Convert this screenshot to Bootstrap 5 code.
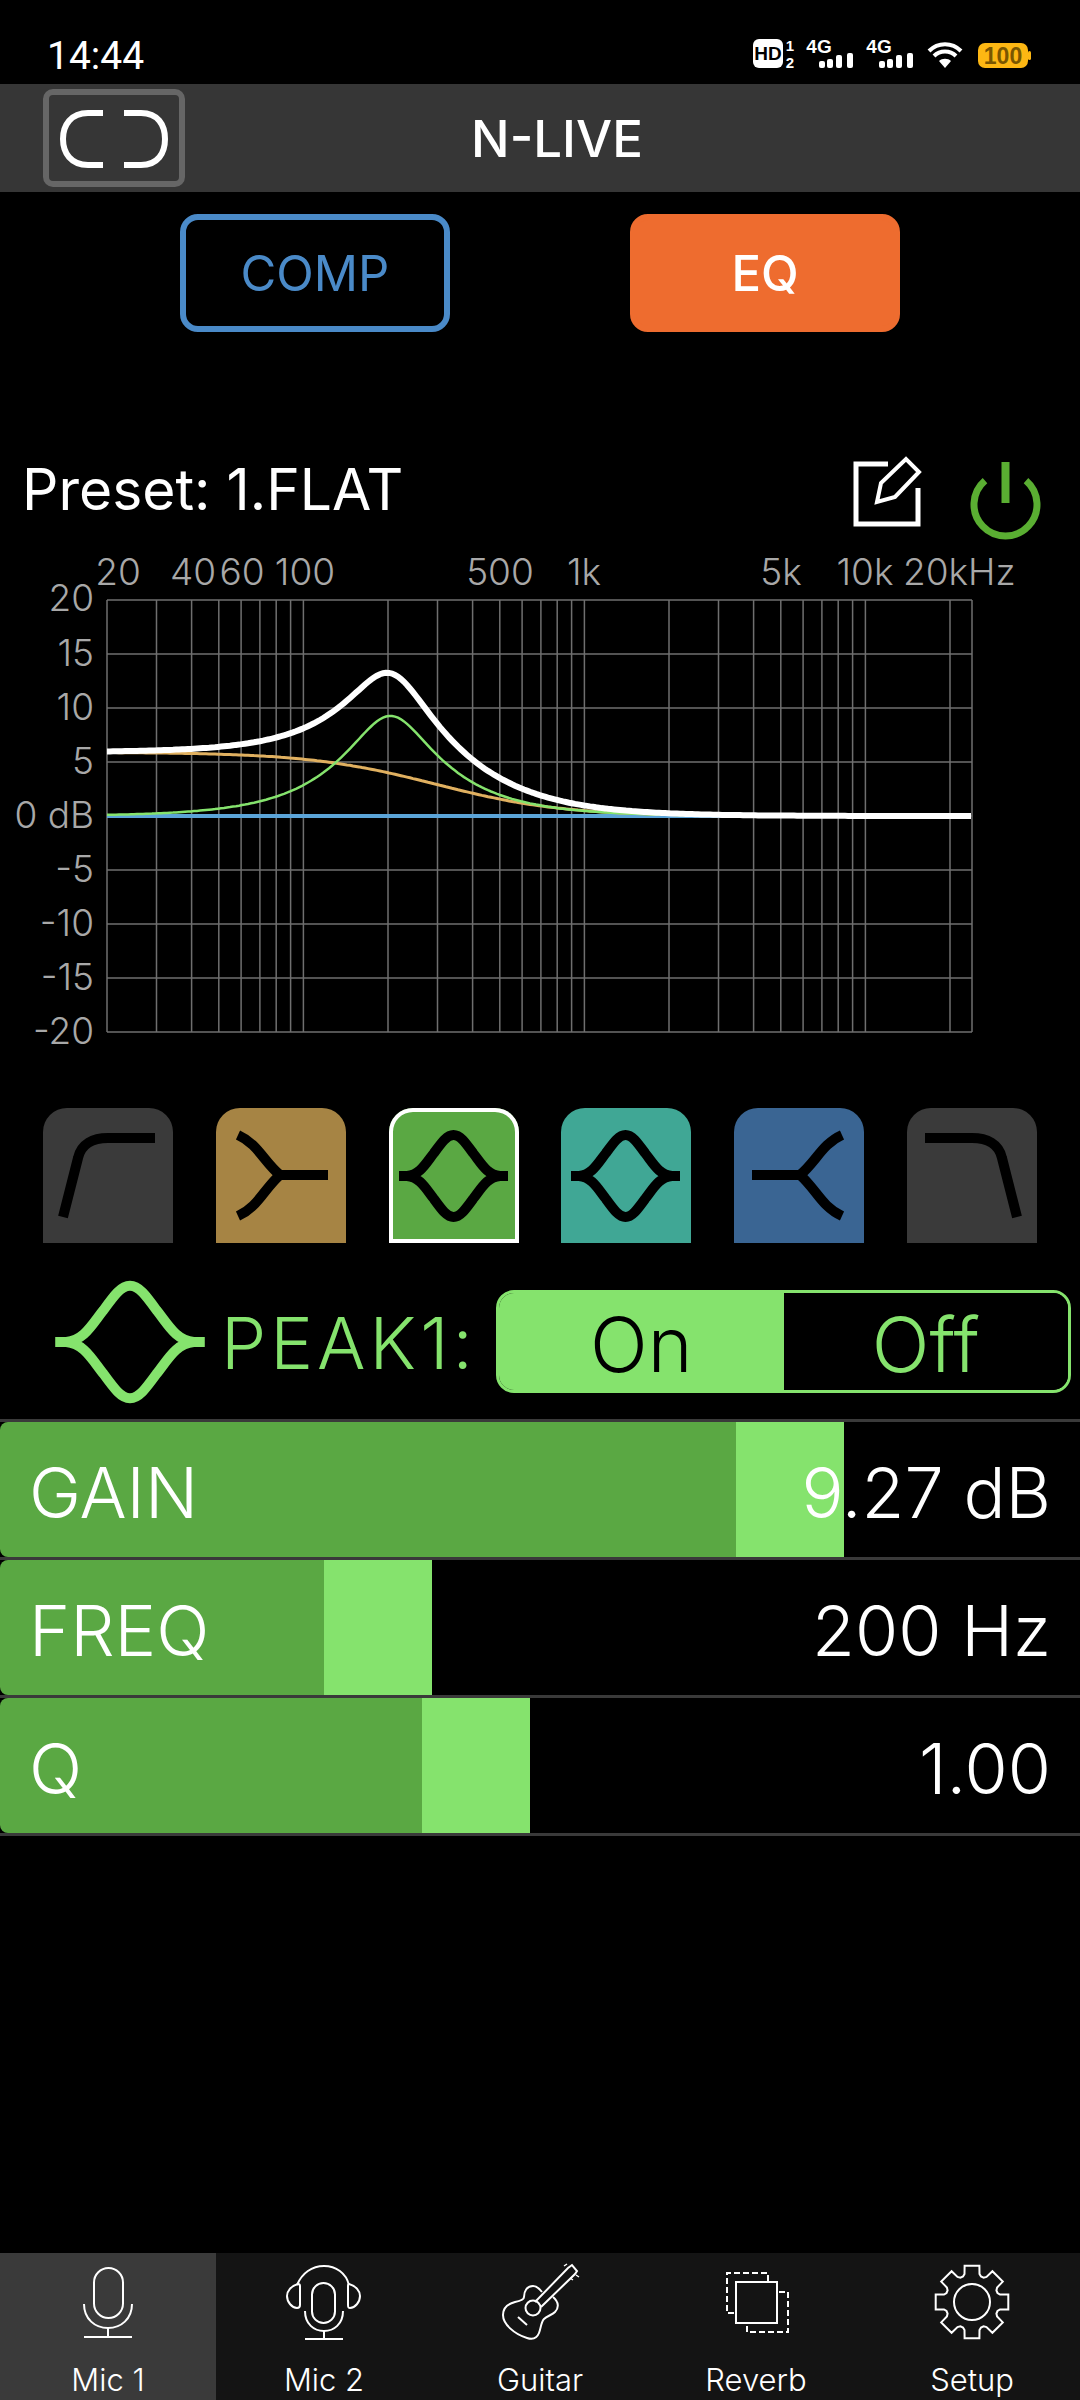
<!DOCTYPE html>
<html lang="en">
<head>
    <meta charset="UTF-8">
    <meta name="viewport" content="width=device-width, initial-scale=1.0">
    <title>N-LIVE</title>
    <link rel="stylesheet" href="https://cdn.jsdelivr.net/npm/bootstrap@5.3.0/dist/css/bootstrap.min.css">
    <style>
        html, body { background: #000; }
        body {
            width: 1080px;
            height: 2400px;
            margin: 0;
            overflow: hidden;
            color: #fff;
            font-family: "Inter", "Liberation Sans", sans-serif;
            font-weight: 300;
        }
        svg { display: block; }

        .status-row { height: 84px; padding: 32px 45px 0 47px; }
        .status-time { font-family: "Roboto", sans-serif; font-weight: 400; font-size: 39px; line-height: 48px; }

        .top-bar { height: 108px; background: #363636; }
        .back-btn {
            width: 142px; height: 98px; margin-left: 43px; padding: 0;
            border: 6px solid #666; border-radius: 10px; background: transparent;
        }
        .app-title { flex: 1; padding-right: 151px; text-align: center; font-size: 51px; font-weight: 500; line-height: 1; }

        .mode-row { padding-top: 22px; }
        .mode-btn {
            width: 270px; height: 118px; padding: 0;
            border: 6px solid; border-radius: 18px;
            font-size: 49px; font-weight: 400; line-height: 1;
        }
        .mode-comp, .mode-comp:hover { border-color: #4a8ac8; background: #000; color: #4a8ac8; }
        .mode-eq, .mode-eq:hover { border-color: #ee6c2f; background: #ee6c2f; color: #fff; font-weight: 500; }

        .preset-row { height: 213px; padding: 124px 39px 0 22px; }
        .preset-name { font-size: 57px; font-weight: 400; line-height: 67px; }
        .preset-icons { gap: 48px; }

        .chart-text { font-family: "Inter", "Liberation Sans", sans-serif; font-weight: 300; font-size: 37px; fill: #a8a8a8; }

        .filter-row { height: 135px; margin-top: 48px; padding: 0 43px; }
        .filter-tab {
            width: 130px; height: 135px; padding: 0;
            border: 0; border-radius: 24px 24px 0 0;
            fill: none; stroke: #000; stroke-width: 10;
        }
        .tab-grey { background: #3a3a3a; }
        .tab-brown { background: #a68444; }
        .tab-green { background: #5aa843; box-shadow: inset 0 0 0 4px #fff; }
        .tab-teal { background: #40a795; }
        .tab-blue { background: #3a6593; }

        .band-row { height: 177px; padding: 40px 9px 0 55px; color: #85e36d; }
        .band-star { fill: none; stroke: #85e36d; stroke-width: 7.300; overflow: visible; }
        .band-name { margin-left: 16px; width: 275px; font-size: 72px; letter-spacing: 4px; line-height: 1; }
        .band-toggle {
            width: 575px; height: 103px; margin-top: 7px;
            border: 3px solid #85e36d; border-radius: 18px; overflow: hidden;
        }
        .band-toggle .btn {
            flex: 1; padding: 5px 0 0; border: 0; border-radius: 0;
            font-size: 76px; font-weight: 300; line-height: 1;
        }
        .toggle-on, .toggle-on:hover { background: #85e36d; color: #000; }
        .toggle-off, .toggle-off:hover { background: #000; color: #85e36d; }

        .param-list { border-top: 3px solid #3a3a3a; margin-top: -1px; }
        .param-row {
            height: 138px; padding: 6px 29px 0 29px;
            border-bottom: 3px solid #3a3a3a;
            font-size: 70px; line-height: 1;
        }
        .param-fill {
            position: absolute; left: 0; top: 0; bottom: 0;
            background: #5aa843; border-radius: 8px 0 0 8px;
        }
        .param-handle {
            position: absolute; right: 0; top: 0; bottom: 0;
            width: 108px; background: #85e36d;
        }
        .param-text { position: relative; }

        .bottom-nav { height: 147px; margin-top: auto; background: #141414; }
        .bottom-nav .nav-link {
            flex: 1; height: 147px; padding: 5px 0 0;
            color: #fff;
            font-family: "Inter", "Liberation Sans", sans-serif; font-weight: 300; font-size: 31px; line-height: 36px;
        }
        .bottom-nav .nav-link.active { background: #3a3a3a; }
        .nav-icon { fill: none; stroke: #fff; stroke-width: 2; margin: 0 auto 22px; }
    </style>
</head>
<body class="d-flex flex-column">

    <div class="status-row d-flex justify-content-between">
        <div class="status-time">14:44</div>
        <svg width="285" height="40" viewBox="750 32 285 40" font-family="Liberation Sans, sans-serif" font-weight="700">
            <rect x="753" y="39" width="30" height="29" rx="6" fill="#fff"/>
            <text x="768" y="60" font-size="19" text-anchor="middle" fill="#000">HD</text>
            <text x="790" y="51" font-size="15" text-anchor="middle" fill="#fff">1</text>
            <text x="790" y="68" font-size="15" text-anchor="middle" fill="#fff">2</text>
            <text x="819" y="53" font-size="19" text-anchor="middle" fill="#fff">4G</text>
            <g fill="#fff">
                <rect x="819" y="61" width="6" height="7" rx="2"/><rect x="827" y="59" width="6" height="9" rx="2"/>
                <rect x="836" y="55" width="6" height="13" rx="2"/><rect x="847" y="53" width="6" height="15" rx="2"/>
            </g>
            <text x="879" y="53" font-size="19" text-anchor="middle" fill="#fff">4G</text>
            <g fill="#fff">
                <rect x="879" y="61" width="6" height="7" rx="2"/><rect x="887" y="59" width="6" height="9" rx="2"/>
                <rect x="896" y="55" width="6" height="13" rx="2"/><rect x="907" y="53" width="6" height="15" rx="2"/>
            </g>
            <g fill="none" stroke="#fff" stroke-width="4">
                <path d="M929 51 C938 42 952 42 961 51"/>
                <path d="M934 56 C940 50 950 50 956 56"/>
            </g>
            <path d="M939 61 C942 58 948 58 951 61 L945 68 Z" fill="#fff"/>
            <rect x="978" y="43" width="50" height="25" rx="7" fill="#fdb713"/>
            <rect x="1028" y="51" width="3" height="9" rx="1.5" fill="#fdb713"/>
            <text x="1003" y="63.500" font-size="23" text-anchor="middle" fill="#7a5600">100</text>
        </svg>
    </div>

    <div class="top-bar d-flex align-items-center">
        <button class="back-btn btn" aria-label="Back">
            <svg width="130" height="86" viewBox="49 95 130 86" fill="none" stroke="#fff" stroke-width="6">
                <path d="M103 113 H88 C71 113 63 125 63 139 C63 153 71 165 88 165 H103"/>
                <path d="M124 113 H141 C158 113 165 125 165 139 C165 153 158 165 141 165 H124"/>
            </svg>
        </button>
        <div class="app-title">N-LIVE</div>
    </div>

    <div class="mode-row d-flex justify-content-evenly">
        <button class="mode-btn mode-comp btn">COMP</button>
        <button class="mode-btn mode-eq btn">EQ</button>
    </div>

    <div class="preset-row d-flex align-items-start justify-content-between">
        <div class="preset-name">Preset: 1.FLAT</div>
        <div class="preset-icons d-flex">
            <svg width="70" height="72" viewBox="852 456 70 72" fill="none" stroke="#fff" stroke-width="5">
                <path d="M888 464 H856 V524 H918 V488"/>
                <path d="M877 502 L881 483 L906 459 L919 472 L895 497 Z" stroke-width="4"/>
            </svg>
            <svg width="71" height="85" viewBox="970 456 71 85" fill="none" stroke="#5aae32" stroke-width="7">
                <path d="M985 480.600 A31.500 31.500 0 1 0 1026 480.600"/>
                <path d="M1005.500 462 V503" stroke-width="8"/>
            </svg>
        </div>
    </div>

    <svg id="eqChart" width="1080" height="515" viewBox="0 545 1080 515">
        <g id="eqGrid" stroke="#6f6f6f" stroke-width="1.500"></g>
        <path id="curveBlue" fill="none" stroke="#5ba4d8" stroke-width="4"/>
        <path id="curveShelf" fill="none" stroke="#e0b060" stroke-width="3"/>
        <path id="curvePeak" fill="none" stroke="#85e36d" stroke-width="2.500"/>
        <path id="curveSum" fill="none" stroke="#fff" stroke-width="6"/>
        <g class="chart-text">
            <text x="118" y="585" text-anchor="middle">20</text>
            <text x="193" y="585" text-anchor="middle">40</text>
            <text x="242" y="585" text-anchor="middle">60</text>
            <text x="305" y="585" text-anchor="middle">100</text>
            <text x="500" y="585" text-anchor="middle">500</text>
            <text x="584" y="585" text-anchor="middle">1k</text>
            <text x="781" y="585" text-anchor="middle">5k</text>
            <text x="865" y="585" text-anchor="middle">10k</text>
            <text x="903" y="585">20kHz</text>
            <g text-anchor="end">
                <text x="94" y="611">20</text>
                <text x="94" y="666">15</text>
                <text x="94" y="720">10</text>
                <text x="94" y="774">5</text>
                <text x="94" y="828">0 dB</text>
                <text x="94" y="882">-5</text>
                <text x="94" y="936">-10</text>
                <text x="94" y="990">-15</text>
                <text x="94" y="1044">-20</text>
            </g>
        </g>
    </svg>

    <svg width="0" height="0" class="position-absolute">
        <defs>
            <path id="peakShape" d="M10 68 H18 C31 67 37 55 45 45 C53 34 58 27 64.500 27 C71 27 76 34 84 45 C92 55 98 67 111 68 H119 M10 68 H18 C31 69 37 81 45 91 C53 102 58 109 64.500 109 C71 109 76 102 84 91 C92 81 98 69 111 68 H119"/>
            <path id="shelfShape" d="M22 27 C42 36 48 54 64 67 H112 M22 108 C42 99 48 81 64 67"/>
            <path id="cutShape" d="M20 109 L35 50 C38 36 50 30 65 30 H112"/>
        </defs>
    </svg>

    <div class="filter-row d-flex justify-content-between">
        <button class="filter-tab tab-grey btn" aria-label="High pass"><svg width="130" height="135"><use href="#cutShape"/></svg></button>
        <button class="filter-tab tab-brown btn" aria-label="Low shelf"><svg width="130" height="135"><use href="#shelfShape"/></svg></button>
        <button class="filter-tab tab-green btn" aria-label="Peak 1"><svg width="130" height="135"><use href="#peakShape"/></svg></button>
        <button class="filter-tab tab-teal btn" aria-label="Peak 2"><svg width="130" height="135"><use href="#peakShape"/></svg></button>
        <button class="filter-tab tab-blue btn" aria-label="High shelf"><svg width="130" height="135"><use href="#shelfShape" transform="matrix(-1 0 0 1 130 0)"/></svg></button>
        <button class="filter-tab tab-grey btn" aria-label="Low pass"><svg width="130" height="135"><use href="#cutShape" transform="matrix(-1 0 0 1 130 0)"/></svg></button>
    </div>

    <div class="band-row d-flex align-items-start">
        <svg class="band-star" width="150" height="118" viewBox="10 25 109 86"><use href="#peakShape"/></svg>
        <div class="band-name pt-4">PEAK1:</div>
        <div class="band-toggle d-flex">
            <button class="toggle-on btn">On</button>
            <button class="toggle-off btn">Off</button>
        </div>
    </div>

    <div class="param-list">
        <div class="param-row position-relative d-flex justify-content-between align-items-center">
            <div class="param-fill" style="width: 844px"><div class="param-handle"></div></div>
            <span class="param-text">GAIN</span><span class="param-text">9.27 dB</span>
        </div>
        <div class="param-row position-relative d-flex justify-content-between align-items-center">
            <div class="param-fill" style="width: 432px"><div class="param-handle"></div></div>
            <span class="param-text">FREQ</span><span class="param-text">200 Hz</span>
        </div>
        <div class="param-row position-relative d-flex justify-content-between align-items-center">
            <div class="param-fill" style="width: 530px"><div class="param-handle"></div></div>
            <span class="param-text">Q</span><span class="param-text">1.00</span>
        </div>
    </div>

    <nav class="bottom-nav nav text-center">
        <a class="nav-link active" href="#">
            <svg class="nav-icon" width="100" height="82" viewBox="58 2262 100 82">
                <rect x="94" y="2272" width="29" height="50" rx="14.500"/>
                <path d="M84 2308 C84 2323 95 2332 108 2332 C121 2332 132 2323 132 2308"/>
                <path d="M108 2332 V2341 M84 2341 H132"/>
            </svg>Mic 1</a>
        <a class="nav-link" href="#">
            <svg class="nav-icon" width="100" height="82" viewBox="275 2262 100 82">
                <rect x="313" y="2287" width="23" height="40" rx="11.500"/>
                <path d="M306 2315 C306 2328 315 2335 325 2335 C335 2335 344 2328 344 2315"/>
                <path d="M325 2335 V2343 M306 2343 H344"/>
                <path d="M298 2289 C303 2277 313 2270 325 2270 C337 2270 347 2277 350 2289"/>
                <path d="M299 2288 C292 2290 288 2295 288 2300 C288 2306 293 2312 298 2312 C300 2312 301 2311 301 2309 V2290 C301 2288 300 2288 299 2288 Z"/>
                <path d="M350 2288 C357 2290 361 2295 361 2300 C361 2306 356 2312 351 2312 C349 2312 349 2311 349 2309 V2290 C349 2288 349 2288 350 2288 Z"/>
            </svg>Mic 2</a>
        <a class="nav-link" href="#">
            <svg class="nav-icon" width="100" height="82" viewBox="490 2262 100 82">
                <path d="M542 2296 C539 2292 536 2290 533 2290 C527 2290 524 2295 524 2301 C524 2304 520 2305 515 2306 C507 2308 503 2313 503 2319 C503 2328 514 2338 527 2342 C533 2344 537 2342 539 2337 C541 2332 541 2326 544 2323 C547 2320 552 2319 555 2316 C559 2312 559 2306 553 2301"/>
                <circle cx="533" cy="2312" r="7.500"/>
                <path d="M535 2306 L568 2272 L572 2269 L577 2275 L575 2278 L541 2311"/>
                <path d="M518 2321 L527 2329"/>
                <path d="M564 2270 L567 2268 M570 2282 L573 2284 M576 2279 L579 2281" stroke-width="1.500"/>
            </svg>Guitar</a>
        <a class="nav-link" href="#">
            <svg class="nav-icon" width="100" height="82" viewBox="705 2262 100 82">
                <path d="M733 2317 H726 V2277 H767 V2285" stroke-dasharray="6 3"/>
                <rect x="735" y="2286" width="41" height="41"/>
                <path d="M778 2296 H787 V2336 H746 V2328" stroke-dasharray="6 3"/>
            </svg>Reverb</a>
        <a class="nav-link" href="#">
            <svg class="nav-icon" width="100" height="82" viewBox="922 2262 100 82">
                <path id="gearPath"/>
                <circle cx="972" cy="2306" r="18"/>
            </svg>Setup</a>
    </nav>

    <script src="https://cdn.jsdelivr.net/npm/bootstrap@5.3.0/dist/js/bootstrap.bundle.min.js"></script>
    <script>
        // chart scale, measured off the reference
        const X0 = 107, X1 = 972, Y0 = 816, PER_DB = 10.8, PER_DECADE = 281;
        const freqX = f => X0 + PER_DECADE * Math.log10(f / 20);

        let grid = "";
        [20, 30, 40, 50, 60, 70, 80, 90, 100, 200, 300, 400, 500, 600, 700, 800, 900, 1000,
         2000, 3000, 4000, 5000, 6000, 7000, 8000, 9000, 10000, 20000].forEach(f => {
            let x = freqX(f).toFixed(1);
            grid += `<line x1="${x}" y1="600" x2="${x}" y2="1032"/>`;
        });
        grid += `<line x1="${X1}" y1="600" x2="${X1}" y2="1032"/>`;
        for (let db = -20; db <= 20; db += 5) {
            let y = Y0 - db * PER_DB;
            grid += `<line x1="${X0}" y1="${y}" x2="${X1}" y2="${y}"/>`;
        }
        document.getElementById("eqGrid").innerHTML = grid;

        // peak band, second order
        function peakDb(f, f0, gain, q) {
            let A = Math.pow(10, gain / 40), u = f / f0, re = 1 - u * u;
            let num = re * re + Math.pow(u * A / q, 2), den = re * re + Math.pow(u / (A * q), 2);
            return 10 * Math.log10(num / den);
        }
        // low shelf, first order, the reference slope is that gentle
        function shelfDb(f, fp, gain) {
            let g = Math.pow(10, gain / 20);
            return 10 * Math.log10((g * g * fp * fp + f * f) / (fp * fp + f * f));
        }
        const peakBand = f => peakDb(f, 204, 9.27, 1), shelfBand = f => shelfDb(f, 210, 5.9);

        function curve(id, fn, xEnd) {
            let d = "";
            for (let x = X0; x <= xEnd; x += 3) {
                let f = 20 * Math.pow(10, (x - X0) / PER_DECADE);
                d += (d ? "L" : "M") + x + " " + (Y0 - fn(f) * PER_DB).toFixed(1);
            }
            document.getElementById(id).setAttribute("d", d);
        }
        curve("curveBlue", () => 0, 760);
        curve("curveShelf", shelfBand, 760);
        curve("curvePeak", peakBand, 760);
        curve("curveSum", f => shelfBand(f) + peakBand(f), X1);

        // gear outline with 8 teeth
        let gear = "";
        for (let i = 0; i < 8; i++) {
            let a = i * Math.PI / 4 - Math.PI / 2;
            [[27, -0.34], [29, -0.26], [37, -0.2], [37, 0.2], [29, 0.26], [27, 0.34]].forEach(p => {
                let x = 972 + p[0] * Math.cos(a + p[1]), y = 2306 + p[0] * Math.sin(a + p[1]);
                gear += (gear ? "L" : "M") + x.toFixed(1) + " " + y.toFixed(1);
            });
        }
        document.getElementById("gearPath").setAttribute("d", gear + "Z");
    </script>
</body>
</html>
